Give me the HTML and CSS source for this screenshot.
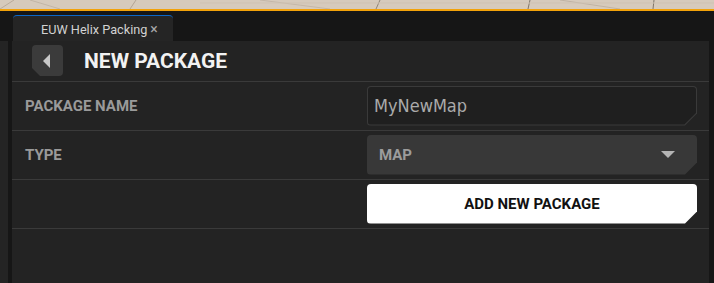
FILE: index.html
```html
<!DOCTYPE html>
<html>
<head>
<meta charset="utf-8">
<link rel="stylesheet" href="styles.css">
</head>
<body>
<div class="viewport">
  <svg width="714" height="9" viewBox="0 0 714 9">
    <rect width="714" height="9" fill="#d6cabc"/>
    <path d="M0 9 L14 0" stroke="#b9ab9b" stroke-width="1" fill="none"/>
    <path d="M30 0 L60 9" stroke="#c2b5a6" stroke-width="1" fill="none"/>
    <path d="M130 9 L136 0" stroke="#b3a595" stroke-width="1" fill="none"/>
    <path d="M260 0 L330 9" stroke="#c4b7a8" stroke-width="1" fill="none"/>
    <path d="M376 9 L380 0" stroke="#8f8476" stroke-width="1" fill="none"/>
    <path d="M528 9 L530 0" stroke="#7f7569" stroke-width="1" fill="none"/>
    <path d="M560 0 L620 9" stroke="#c0b3a4" stroke-width="1" fill="none"/>
    <path d="M653 9 L654 0" stroke="#7f7569" stroke-width="1" fill="none"/>
    <path d="M200 3 L714 3" stroke="#cfc2b3" stroke-width="1" fill="none"/>
  </svg>
</div>
<div class="accent"></div>
<div class="tabbar">
  <div class="tab">
    <span class="tab-title">EUW Helix Packing</span>
    <span class="tab-close">×</span>
  </div>
</div>
<div class="workspace">
  <div class="side"></div>
  <div class="panel">
    <div class="header">
      <div class="back">
        <svg width="8" height="14" viewBox="0 0 8 14"><polygon points="7,0 7,14 0,7" fill="#c8c8c8"/></svg>
      </div>
      <div class="title">NEW PACKAGE</div>
    </div>
    <div class="row">
      <div class="label">PACKAGE NAME</div>
      <div class="control input-frame">
        <div class="input-inner">MyNewMap</div>
      </div>
    </div>
    <div class="row">
      <div class="label">TYPE</div>
      <div class="control dropdown">
        <span class="dropdown-text">MAP</span>
        <svg width="14" height="7" viewBox="0 0 14 7"><polygon points="0,0 14,0 7,7" fill="#b4b4b4"/></svg>
      </div>
    </div>
    <div class="row">
      <div class="label"></div>
      <div class="control button">ADD NEW PACKAGE</div>
    </div>
  </div>
  <div class="side-right"></div>
</div>
</body>
</html>
```
FILE: styles.css
```css
* { box-sizing: border-box; }
html, body {
  margin: 0;
  padding: 0;
  width: 714px;
  height: 283px;
  overflow: hidden;
  background: #161616;
  font-family: Roboto, "Noto Sans", sans-serif;
}
.viewport { height: 9px; line-height: 0; }
.viewport svg { display: block; }
.accent { height: 2px; background: #f2a20a; }
.tabbar {
  height: 30px;
  display: flex;
  align-items: flex-end;
  padding-left: 13px;
  background: #161616;
}
.tab {
  width: 160px;
  height: 26px;
  background: #252525;
  border-top: 1px solid #0a66c8;
  border-radius: 4px 4px 0 0;
  display: flex;
  align-items: center;
  padding-left: 28px;
  gap: 3px;
  color: #d2d2d2;
  font-family: Roboto, "Noto Sans", sans-serif;
  font-size: 12.7px;
  padding-top: 1px;
}
.tab-close { color: #a8a8a8; font-size: 14px; }
.workspace {
  height: 242px;
  display: flex;
}
.side { width: 8px; background: #242424; }
.side-right { width: 5px; background: #161616; margin-left: auto; }
.panel {
  width: 697px;
  margin-left: 4px;
  background: #232323;
}
.header {
  height: 41px;
  border-bottom: 1px solid #3a3a3a;
  display: flex;
  align-items: center;
  padding-left: 20px;
  padding-bottom: 1px;
}
.back {
  width: 31px;
  height: 31px;
  background: #3b3b3b;
  border-radius: 4px;
  clip-path: polygon(0 0, 100% 0, 100% 100%, 8px 100%, 0 calc(100% - 8px));
  display: flex;
  align-items: center;
  justify-content: center;
  padding-right: 2px;
}
.back svg { display: block; }
.title {
  margin-left: 21px;
  color: #f2f2f2;
  font-weight: 700;
  font-size: 21px;
}
.row {
  height: 49px;
  border-bottom: 1px solid #3a3a3a;
  display: flex;
  align-items: center;
  padding-bottom: 1px;
}
.label {
  width: 355px;
  padding-left: 13px;
  color: #9a9a9a;
  font-weight: 700;
  font-size: 15px;
}
.control {
  width: 330px;
  height: 40px;
  border-radius: 4px;
  clip-path: polygon(0 0, 100% 0, 100% calc(100% - 12px), calc(100% - 12px) 100%, 0 100%);
}
.input-frame {
  background: #3a3a3a;
  padding: 1px;
}
.input-inner {
  height: 100%;
  background: #1f1f1f;
  border-radius: 3px;
  clip-path: polygon(0 0, 100% 0, 100% calc(100% - 11.6px), calc(100% - 11.6px) 100%, 0 100%);
  display: flex;
  align-items: center;
  padding-left: 6px;
  color: #aaaaaa;
  font-family: "DejaVu Sans Condensed", "DejaVu Sans", sans-serif;
  font-size: 18px;
}
.dropdown {
  background: #383838;
  display: flex;
  align-items: center;
  justify-content: space-between;
  padding: 0 22px 0 12px;
}
.dropdown-text {
  color: #9c9c9c;
  font-weight: 700;
  font-size: 15px;
}
.dropdown svg { display: block; }
.button {
  background: #ffffff;
  display: flex;
  align-items: center;
  justify-content: center;
  color: #111111;
  font-weight: 700;
  font-size: 15px;
}
```
